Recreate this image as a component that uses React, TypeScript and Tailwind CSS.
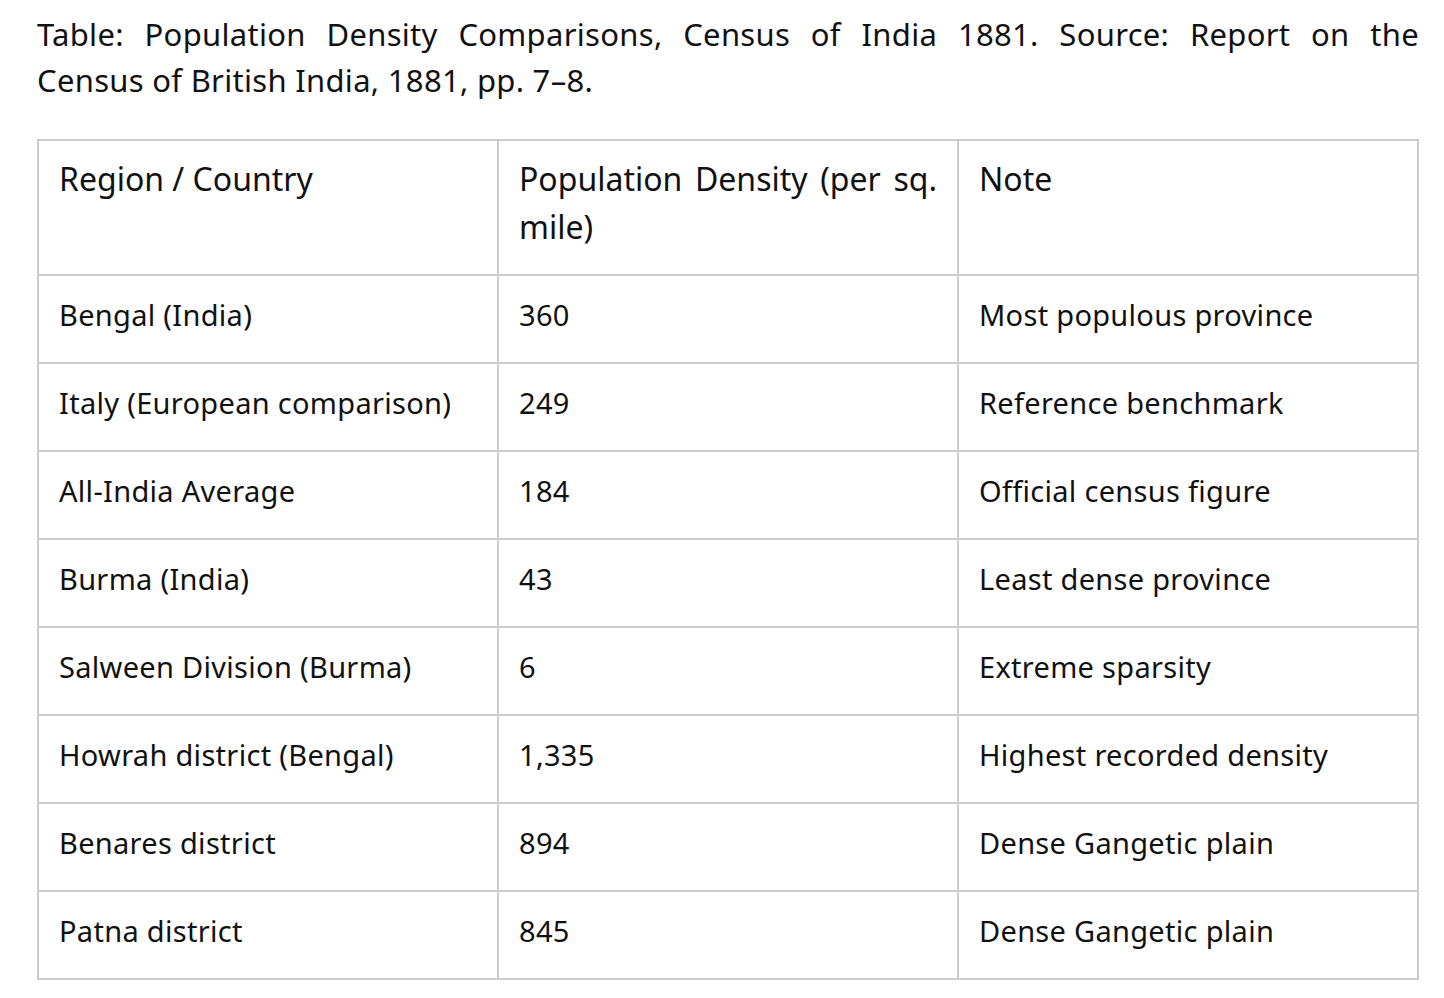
const rows: [string, string, string][] = [
  ["Bengal (India)", "360", "Most populous province"],
  ["Italy (European comparison)", "249", "Reference benchmark"],
  ["All-India Average", "184", "Official census figure"],
  ["Burma (India)", "43", "Least dense province"],
  ["Salween Division (Burma)", "6", "Extreme sparsity"],
  ["Howrah district (Bengal)", "1,335", "Highest recorded density"],
  ["Benares district", "894", "Dense Gangetic plain"],
  ["Patna district", "845", "Dense Gangetic plain"],
];

export default function App() {
  return (
    <div className="min-h-screen bg-white text-[#111] font-['Noto_Sans',sans-serif]">
      <div className="ml-[37px] w-[1382px] pt-[11px]">
        <div className="text-[31px] leading-[46px] tracking-[0.3px]">
          <p className="text-justify [text-align-last:justify]">
            Table: Population Density Comparisons, Census of India 1881. Source: Report on the
          </p>
          <p>Census of British India, 1881, pp. 7–8.</p>
        </div>

        <table className="mt-[36px] w-full table-fixed border-collapse border-2 border-[#cccccc]">
          <thead className="text-[32px] leading-[48px]">
            <tr>
              <th className="w-1/3 border-2 border-[#cccccc] px-[20px] pt-[14px] pb-[23px] text-left align-top font-normal">
                Region / Country
              </th>
              <th className="w-1/3 border-2 border-[#cccccc] px-[20px] pt-[14px] pb-[23px] text-justify align-top font-normal">
                Population Density (per sq. mile)
              </th>
              <th className="w-1/3 border-2 border-[#cccccc] px-[20px] pt-[14px] pb-[23px] text-left align-top font-normal">
                Note
              </th>
            </tr>
          </thead>
          <tbody className="text-[29px] leading-[46px] tracking-[0.3px]">
            {rows.map((r) => (
              <tr key={r[0]}>
                {r.map((c, i) => (
                  <td key={i} className="border-2 border-[#cccccc] px-[20px] pt-[16px] pb-[24px] align-top">
                    {c}
                  </td>
                ))}
              </tr>
            ))}
          </tbody>
        </table>
      </div>
    </div>
  );
}
